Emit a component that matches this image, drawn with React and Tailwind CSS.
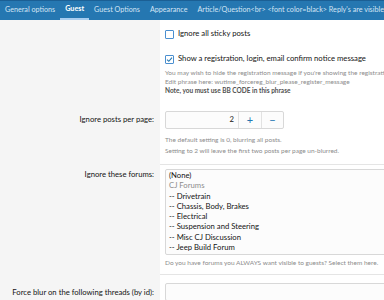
import React from "react";

const font = { fontFamily: 'Lato, "Noto Sans", sans-serif' };

function Box({ checked }) {
  return (
    <span className="w-[9px] h-[9px] border border-[#4a8fd0] rounded-[1px] bg-white flex items-center justify-center shrink-0">
      {checked && (
        <svg width="7" height="7" viewBox="0 0 7 7">
          <path d="M1 3.6 L2.8 5.3 L6 1.6" fill="none" stroke="#2577b1" strokeWidth="1.1" />
        </svg>
      )}
    </span>
  );
}

export default function App() {
  const tabs = ["General options", "Guest", "Guest Options", "Appearance", "Article/Question<br> <font color=black> Reply's are visible"];
  const opts = [
    ["(None)", false],
    ["CJ Forums", true],
    ["-- Drivetrain", false],
    ["-- Chassis, Body, Brakes", false],
    ["-- Electrical", false],
    ["-- Suspension and Steering", false],
    ["-- Misc CJ Discussion", false],
    ["-- Jeep Build Forum", false],
    ["-- Important Threads and Contr", false],
  ];
  return (
    <div className="w-[384px] h-[300px] overflow-hidden bg-white text-[#141414]" style={font}>
      <nav className="h-[20px] bg-[#2577b1] border-t border-[#1b5f94] flex items-stretch pl-[5px] gap-[10px] whitespace-nowrap overflow-hidden text-[7.2px]">
        {tabs.map((t, i) => (
          <span
            key={i}
            className={
              i === 1
                ? "flex items-center px-[5px] -mx-[5px] text-white font-bold border-b-2 border-[#a8cdef]"
                : "flex items-center text-[#d3e5f5]"
            }
          >
            {t}
          </span>
        ))}
      </nav>

      <div className="flex">
        <div className="w-[160px] bg-[#f5f5f5] shrink-0" />
        <div className="flex-1 pl-[5px] pt-[8px] pb-[8px] text-[7.7px]">
          <div className="flex items-center gap-[3px] h-[10px] mt-[1px]">
            <Box />
            <span className="text-[#141414] ml-[1px]">Ignore all sticky posts</span>
          </div>
          <div className="flex items-center gap-[3px] h-[10px] mt-[15px]">
            <Box checked />
            <span className="ml-[1px] whitespace-nowrap">Show a registration, login, email confirm notice message</span>
          </div>
          <div className="mt-[4px] text-[6.5px] leading-[9px] text-[#8c8c8c] whitespace-nowrap">
            <div>You may wish to hide the registration message if you're showing the registration</div>
            <div>Edit phrase here: wutime_forcereg_blur_please_register_message</div>
            <div className="font-bold text-[#505050]">Note, you must use BB CODE in this phrase</div>
          </div>
        </div>
      </div>

      <div className="flex">
        <div className="w-[160px] bg-[#f5f5f5] shrink-0 text-right pr-[6px] pt-[11px] text-[7.7px]">Ignore posts per page:</div>
        <div className="flex-1 pl-[5px] pt-[8px] pb-[8px] border-b border-[#e5e5e5]">
          <div className="flex h-[18px] w-[119px] border border-[#d8d8d8] rounded-[2px] bg-[#fcfcfc] text-[7.7px]">
            <div className="flex-1 text-right pr-[4px] flex items-center justify-end">2</div>
            <div className="w-[23px] border-l border-[#e2e2e2] flex items-center justify-center text-[#2577b1] text-[11px]">+</div>
            <div className="w-[22px] border-l border-[#e2e2e2] flex items-center justify-center text-[#2577b1] text-[11px]">−</div>
          </div>
          <div className="mt-[5px] text-[6.5px] leading-[11px] text-[#8c8c8c] whitespace-nowrap">
            <div>The default setting is 0, blurring all posts.</div>
            <div>Setting to 2 will leave the first two posts per page un-blurred.</div>
          </div>
        </div>
      </div>

      <div className="flex">
        <div className="w-[160px] bg-[#f5f5f5] shrink-0 text-right pr-[6px] pt-[4px] text-[7.7px]">Ignore these forums:</div>
        <div className="flex-1 pl-[5px] pt-[4px] pb-[6px] border-b border-[#e5e5e5] min-w-0">
          <div className="h-[86px] overflow-hidden border border-[#d8d8d8] rounded-[2px] bg-[#fcfcfc] pl-[3px] pt-[0px] text-[7.7px] leading-[10.3px] whitespace-nowrap -mr-[10px]">
            {opts.map(([o, g], i) => (
              <div key={i} className={g ? "text-[#8c8c8c]" : ""}>{o}</div>
            ))}
          </div>
          <div className="mt-[3px] text-[6.5px] leading-[10px] text-[#8c8c8c] whitespace-nowrap">
            Do you have forums you ALWAYS want visible to guests? Select them here.
          </div>
        </div>
      </div>

      <div className="flex h-[40px]">
        <div className="w-[160px] bg-[#f5f5f5] shrink-0 text-right pr-[6px] pt-[12px] text-[7.7px] whitespace-nowrap">Force blur on the following threads (by id):</div>
        <div className="flex-1 pl-[5px] pt-[8px]">
          <div className="h-[18px] border border-[#d8d8d8] rounded-[2px] bg-[#fcfcfc] -mr-[10px]" />
        </div>
      </div>
    </div>
  );
}
